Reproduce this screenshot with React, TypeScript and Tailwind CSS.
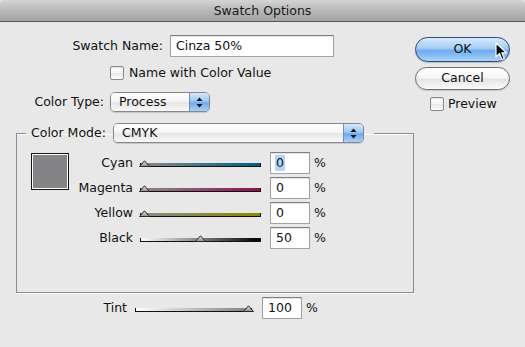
import React from "react";

function Checkbox() {
  return (
    <div className="w-[14px] h-[14px] shrink-0 rounded-[2px] border border-[#8a8a8a] bg-[linear-gradient(to_bottom,#ffffff,#f4f4f4_50%,#e8e8e8_51%,#fdfdfd)] shadow-[inset_0_1px_1px_rgba(0,0,0,0.12)]" />
  );
}

function Arrows() {
  return (
    <svg width="7" height="11" viewBox="0 0 7 11">
      <polygon points="3.5,0.5 6.5,4 0.5,4" fill="#111" />
      <polygon points="0.5,7 6.5,7 3.5,10.5" fill="#111" />
    </svg>
  );
}

function Popup({ label, className }: { label: string; className: string }) {
  return (
    <div
      className={
        "flex h-[20px] shrink-0 rounded-[5px] border border-[#888] overflow-hidden shadow-[0_1px_1px_rgba(0,0,0,0.15)] " +
        className
      }
    >
      <div className="flex-1 flex items-center pl-[8px] text-[12.5px] text-[#111] bg-[linear-gradient(to_bottom,#ffffff,#f6f6f6_45%,#e6e6e6_55%,#f8f8f8)]">
        {label}
      </div>
      <div className="w-[20px] flex items-center justify-center border-l border-[#6f8fbf] bg-[linear-gradient(to_bottom,#d6e8fb,#9cc8f3_45%,#6eaaec_55%,#a6d2f8)]">
        <Arrows />
      </div>
    </div>
  );
}

function Field({
  value,
  className,
  selected,
}: {
  value: string;
  className: string;
  selected?: boolean;
}) {
  return (
    <div
      className={
        "h-[22px] shrink-0 flex items-center bg-white border border-[#a2a2a2] border-t-[#7e7e7e] shadow-[inset_0_1px_1px_rgba(0,0,0,0.12)] pl-[4px] text-[12.5px] text-[#111] " +
        className
      }
    >
      {selected ? (
        <span className="bg-[#b5d5ff] px-[1px] leading-[16px]">{value}</span>
      ) : (
        <span className="pl-[1px]">{value}</span>
      )}
    </div>
  );
}

function Slider({
  value,
  widthClass,
  width,
  trackClass,
}: {
  value: number;
  widthClass: string;
  width: number;
  trackClass: string;
}) {
  const center = 4 + ((width - 8) * value) / 100;
  return (
    <div className={"relative h-[7px] shrink-0 flex items-end " + widthClass}>
      <div
        className={
          "w-full h-[4px] border-b border-r border-l border-[#111] " + trackClass
        }
      />
      <svg
        width="11"
        height="7"
        viewBox="0 0 11 7"
        className="absolute bottom-0"
        style={{ left: center - 5.5 }}
      >
        <defs>
          <linearGradient id="thumbg" x1="0" y1="0" x2="0" y2="1">
            <stop offset="0" stopColor="#e2e2e2" />
            <stop offset="1" stopColor="#8e8e8e" />
          </linearGradient>
        </defs>
        <polygon
          points="0.5,6.5 5.5,0.8 10.5,6.5"
          fill="url(#thumbg)"
          stroke="#2a2a2a"
          strokeWidth="1"
          strokeLinejoin="round"
        />
      </svg>
    </div>
  );
}

function ColorRow({
  label,
  value,
  trackClass,
  selected,
}: {
  label: string;
  value: number;
  trackClass: string;
  selected?: boolean;
}) {
  return (
    <div className="flex items-center h-[22px]">
      <div className="w-[64px] text-right text-[12.5px] text-[#111]">{label}</div>
      <div className="ml-[7px]">
        <Slider value={value} width={121} widthClass="w-[121px]" trackClass={trackClass} />
      </div>
      <Field value={String(value)} className="ml-[9px] w-[40px]" selected={selected} />
      <div className="ml-[4px] text-[12.5px] text-[#111]">%</div>
    </div>
  );
}

function Cursor() {
  return (
    <svg
      width="13"
      height="19"
      viewBox="0 0 13 19"
      className="absolute left-[79px] top-[4px]"
    >
      <path
        d="M1 1 L1 15 L4.5 11.5 L7 17.5 L9.3 16.5 L6.8 10.8 L11.5 10.8 Z"
        fill="#000"
        stroke="#fff"
        strokeWidth="1.2"
        strokeLinejoin="round"
      />
    </svg>
  );
}

export default function App() {
  return (
    <div className="w-[525px] h-[347px] bg-[#e8e8e8] overflow-hidden font-[family-name:DejaVu_Sans,Verdana,sans-serif] text-[#111]">
      {/* title bar */}
      <div className="h-[22px] flex items-center justify-center border-b border-[#555] bg-[linear-gradient(to_bottom,#d4d4d4,#b8b8b8_50%,#a2a2a2)] rounded-t-[4px]">
        <span className="text-[12.5px] text-[#1a1a1a] pt-[1px]">Swatch Options</span>
      </div>

      {/* top section */}
      <div className="flex">
        <div className="w-[415px]">
          <div className="flex items-center h-[22px] mt-[13px]">
            <div className="w-[163px] text-right text-[12.5px]">Swatch Name:</div>
            <Field value="Cinza 50%" className="ml-[7px] w-[164px]" />
          </div>
          <div className="flex items-center h-[14px] mt-[9px] pl-[110px]">
            <Checkbox />
            <span className="ml-[5px] text-[12.5px] leading-[14px]">Name with Color Value</span>
          </div>
          <div className="flex items-center h-[20px] mt-[12px]">
            <div className="w-[104px] text-right text-[12.5px]">Color Type:</div>
            <Popup label="Process" className="ml-[6px] w-[100px]" />
          </div>
        </div>

        <div className="w-[95px] flex flex-col">
          <div className="relative mt-[15px] h-[25px] rounded-full border border-[#2c4a80] bg-[linear-gradient(to_bottom,#d8eafc,#a4cdf6_45%,#6eaaee_55%,#a8d4fa)] flex items-center justify-center text-[12.5px] text-[#111] shadow-[0_1px_1px_rgba(0,0,0,0.2)]">
            OK
            <Cursor />
          </div>
          <div className="mt-[5px] h-[23px] rounded-full border border-[#6e6e6e] bg-[linear-gradient(to_bottom,#ffffff,#f6f6f6_45%,#e4e4e4_55%,#fbfbfb)] flex items-center justify-center text-[12.5px] text-[#111] shadow-[0_1px_1px_rgba(0,0,0,0.15)]">
            Cancel
          </div>
          <div className="flex items-center h-[14px] mt-[7px] pl-[15px]">
            <Checkbox />
            <span className="ml-[4px] text-[12.5px] leading-[14px]">Preview</span>
          </div>
        </div>
      </div>

      {/* Color mode group */}
      <fieldset className="ml-[16px] mt-[11px] w-[398px] border border-[#8c8c8c] shadow-[inset_0_1px_0_#fff,0_1px_0_#fff]">
        <legend className="ml-[9px] pl-[5px] pr-[10px]">
          <div className="flex items-center h-[20px]">
            <span className="w-[82px] text-[12.5px]">Color Mode:</span>
            <Popup label="CMYK" className="w-[251px]" />
          </div>
        </legend>
        <div className="h-[149px] flex pt-[9px]">
          <div className="ml-[14px] mt-[1px] w-[38px] h-[37px] border border-[#151515] bg-[#848486] shadow-[inset_0_0_0_1px_#fff]" />
          <div className="flex flex-col gap-[3px]">
            <ColorRow
              label="Cyan"
              value={0}
              selected
              trackClass="bg-[linear-gradient(to_right,#8a8a8a,#00607f)]"
            />
            <ColorRow
              label="Magenta"
              value={0}
              trackClass="bg-[linear-gradient(to_right,#8a8a8a,#8c0f4e)]"
            />
            <ColorRow
              label="Yellow"
              value={0}
              trackClass="bg-[linear-gradient(to_right,#8a8a8a,#8a8a00)]"
            />
            <ColorRow
              label="Black"
              value={50}
              trackClass="bg-[linear-gradient(to_right,#ffffff,#000000)]"
            />
          </div>
        </div>
      </fieldset>

      {/* Tint */}
      <div className="flex items-center h-[22px] mt-[4px]">
        <div className="w-[127px] text-right text-[12.5px]">Tint</div>
        <div className="ml-[8px]">
          <Slider
            value={100}
            width={117}
            widthClass="w-[117px]"
            trackClass="bg-[linear-gradient(to_right,#ffffff,#7e7e7e)]"
          />
        </div>
        <Field value="100" className="ml-[10px] w-[40px]" />
        <div className="ml-[4px] text-[12.5px]">%</div>
      </div>
    </div>
  );
}
